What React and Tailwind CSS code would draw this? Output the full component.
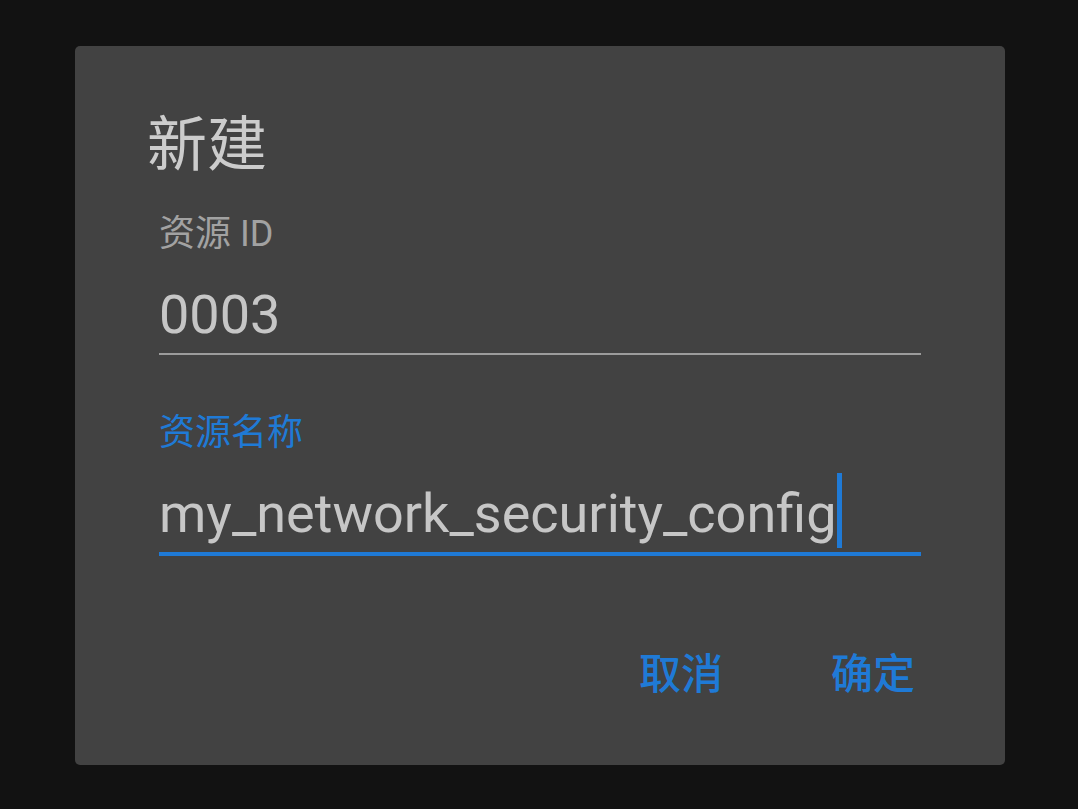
export default function App() {
  const cjk = { fontFamily: '"Noto Sans CJK SC", "Noto Sans", sans-serif' };
  const latin = { fontFamily: 'Roboto, "Noto Sans CJK SC", sans-serif' };
  return (
    <div className="w-full h-[809px] bg-[#121212] pt-[46px] pl-[75px]">
      <div className="w-[930px] h-[719px] bg-[#424242] rounded-[5px] flex flex-col">
        <div className="ml-[72px] mt-[64px] text-[60px] leading-[60px] text-[#cccccc]" style={cjk}>
          新建
        </div>
        <div className="mx-[84px] flex flex-col">
          <div className="mt-[46px] text-[36px] leading-[36px] text-[#a2a2a2]" style={latin}>
            资源 ID
          </div>
          <div className="mt-[36px] text-[54px] leading-[54px] text-[#c6c6c6]" style={latin}>
            0003
          </div>
          <div className="mt-[11px] h-[2px] bg-[#9c9c9c]" />
          <div className="mt-[60px] text-[36px] leading-[36px] text-[#1f7ad6]" style={latin}>
            资源名称
          </div>
          <div className="mt-[36px] text-[54px] leading-[54px] text-[#c6c6c6]" style={latin}>
            <span className="relative">
              my_network_security_config
              <span className="absolute left-full ml-[1px] top-[-9px] w-[5px] h-[75px] bg-[#1f7ad6]" />
            </span>
          </div>
          <div className="mt-[11px] h-[4px] bg-[#1f7ad6]" />
        </div>
        <div className="mt-[94px] pr-[90px] flex justify-end gap-[108px] text-[42px] leading-[42px] font-medium text-[#1f7ad6]" style={cjk}>
          <span>取消</span>
          <span>确定</span>
        </div>
      </div>
    </div>
  );
}
